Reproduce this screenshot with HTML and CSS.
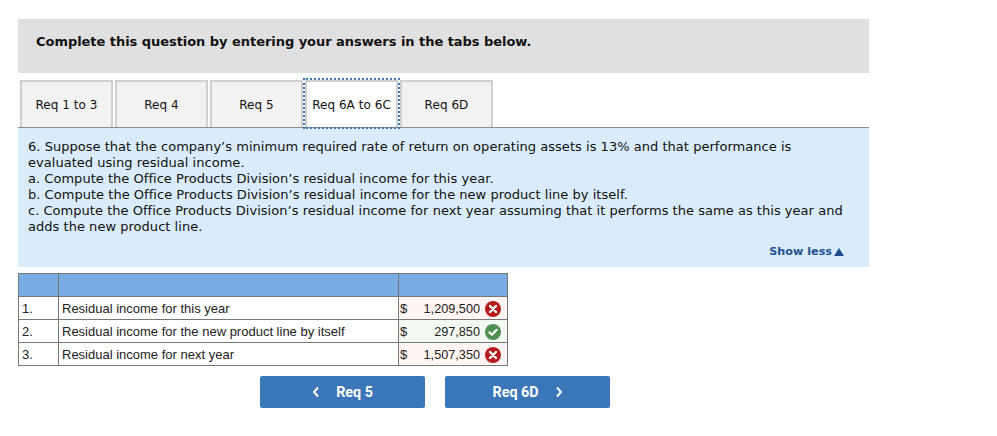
FILE: index.html
```html
<!DOCTYPE html>
<html lang="en">
<head>
    <meta charset="UTF-8">
    <meta name="viewport" content="width=device-width, initial-scale=1.0">
    <title>Req 6A to 6C</title>
    <link rel="stylesheet" href="styles.css">
</head>
<body>
    <!-- Instruction banner -->
    <div class="banner">Complete this question by entering your answers in the tabs below.</div>

    <!-- Tabs -->
    <div class="tabs">
        <a class="tab">Req 1 to 3</a>
        <a class="tab">Req 4</a>
        <a class="tab">Req 5</a>
        <a class="tab active">Req 6A to 6C</a>
        <a class="tab">Req 6D</a>
    </div>

    <!-- Question text -->
    <div class="panel">
        <p>6. Suppose that the company’s minimum required rate of return on operating assets is 13% and that performance is evaluated using residual income.<br>
        a. Compute the Office Products Division’s residual income for this year.<br>
        b. Compute the Office Products Division’s residual income for the new product line by itself.<br>
        c. Compute the Office Products Division’s residual income for next year assuming that it performs the same as this year and adds the new product line.</p>
        <div class="show-less">Show less<span class="arrow"></span></div>
    </div>

    <!-- Answer table -->
    <table class="answers">
        <tr class="head">
            <td class="num"></td>
            <td class="label"></td>
            <td class="value"></td>
        </tr>
        <tr>
            <td class="num">1.</td>
            <td class="label">Residual income for this year</td>
            <td class="value wrong">
                <div class="cell"><span>$</span><span class="amount">1,209,500</span>
                    <svg class="mark" viewBox="0 0 16 16"><circle cx="8" cy="8" r="8" fill="#b71c1c"/><path d="M5 5l6 6M11 5l-6 6" stroke="#fff" stroke-width="2.4" stroke-linecap="round"/></svg>
                </div>
            </td>
        </tr>
        <tr>
            <td class="num">2.</td>
            <td class="label">Residual income for the new product line by itself</td>
            <td class="value right">
                <div class="cell"><span>$</span><span class="amount">297,850</span>
                    <svg class="mark" viewBox="0 0 16 16"><circle cx="8" cy="8" r="8" fill="#4f8f4f"/><path d="M4.4 8.4l2.5 2.4 4.8-5" fill="none" stroke="#fff" stroke-width="2.2" stroke-linecap="round" stroke-linejoin="round"/></svg>
                </div>
            </td>
        </tr>
        <tr>
            <td class="num">3.</td>
            <td class="label">Residual income for next year</td>
            <td class="value wrong">
                <div class="cell"><span>$</span><span class="amount">1,507,350</span>
                    <svg class="mark" viewBox="0 0 16 16"><circle cx="8" cy="8" r="8" fill="#b71c1c"/><path d="M5 5l6 6M11 5l-6 6" stroke="#fff" stroke-width="2.4" stroke-linecap="round"/></svg>
                </div>
            </td>
        </tr>
    </table>

    <!-- Prev / next -->
    <div class="pager">
        <button class="nav-btn">
            <svg class="chev" viewBox="0 0 8 12"><path d="M6 1.5L2 6l4 4.500" fill="none" stroke="#fff" stroke-width="2"/></svg>
            <span>Req 5</span>
        </button>
        <button class="nav-btn">
            <span>Req 6D</span>
            <svg class="chev" viewBox="0 0 8 12"><path d="M2 1.500L6 6l-4 4.500" fill="none" stroke="#fff" stroke-width="2"/></svg>
        </button>
    </div>
</body>
</html>
```

FILE: styles.css
```css
* {
    margin: 0;
    padding: 0;
    box-sizing: border-box;
}

body {
    font-family: "DejaVu Sans", Verdana, sans-serif;
    font-size: 13px;
    line-height: 16px;
    color: #111;
    background: #fff;
    padding: 19px 0 0 18px;
    width: 869px;
}

.banner {
    height: 54px;
    padding: 15px 18px 0;
    background: #e0e0e0;
    font-weight: bold;
    font-size: 13px;
    letter-spacing: -0.045px;
}

.tabs {
    display: flex;
    gap: 2px;
    padding: 7px 0 0 2px;
}

.tab {
    width: 93px;
    height: 47px;
    display: flex;
    align-items: center;
    justify-content: center;
    font-size: 12px;
    letter-spacing: 0.05px;
    background: #f2f2f2;
    border: 2px solid #cfcfcf;
    border-bottom: none;
    white-space: nowrap;
}

.tab.active {
    background: #fff;
    outline: 2px dotted #3a76b8;
    outline-offset: 0;
}

.panel {
    height: 140px;
    padding: 11px 20px 0 10px;
    background: #d9ecfb;
    border-top: 1px solid #8c8c8c;
}

.panel p {
    letter-spacing: 0.03px;
}

.show-less {
    margin-top: 9px;
    margin-right: 5px;
    display: flex;
    justify-content: flex-end;
    align-items: center;
    gap: 2px;
    font-size: 11.200px;
    font-weight: bold;
    color: #23538f;
}

.arrow {
    width: 0;
    height: 0;
    border-left: 5px solid transparent;
    border-right: 5px solid transparent;
    border-bottom: 8px solid #1d4e8c;
}

.answers {
    margin-top: 6px;
    width: 489px;
    border-collapse: collapse;
    table-layout: fixed;
    font-family: "Liberation Sans", Arial, sans-serif;
    font-size: 13px;
    line-height: 14px;
}

.answers td {
    border: 1px solid #777;
    height: 23px;
    padding: 1px 3px 0;
    white-space: nowrap;
    color: #222;
}

.answers .head td {
    background: #7aace4;
}

.num {
    width: 40px;
}

.label {
    width: 340px;
}

.value {
    width: 109px;
}

.answers td.value {
    padding: 1px 0 0 1px;
}

.wrong {
    background: #fff5f3;
}

.right {
    background: #f4f8f3;
}

.cell {
    display: flex;
    align-items: center;
}

.amount {
    margin-left: auto;
    font-size: 12.700px;
}

.mark {
    width: 16px;
    height: 16px;
    margin: 0 6px 0 5px;
}

.pager {
    display: flex;
    justify-content: flex-start;
    gap: 20px;
    margin: 10px 0 0 242px;
}

.nav-btn {
    width: 165px;
    height: 32px;
    display: flex;
    align-items: center;
    justify-content: center;
    gap: 16px;
    border: none;
    border-radius: 2px;
    background: #3a76b8;
    color: #fff;
    font-family: Roboto, "Liberation Sans", sans-serif;
    font-size: 14.300px;
    font-weight: bold;
}

.chev {
    width: 8px;
    height: 12px;
}
```
